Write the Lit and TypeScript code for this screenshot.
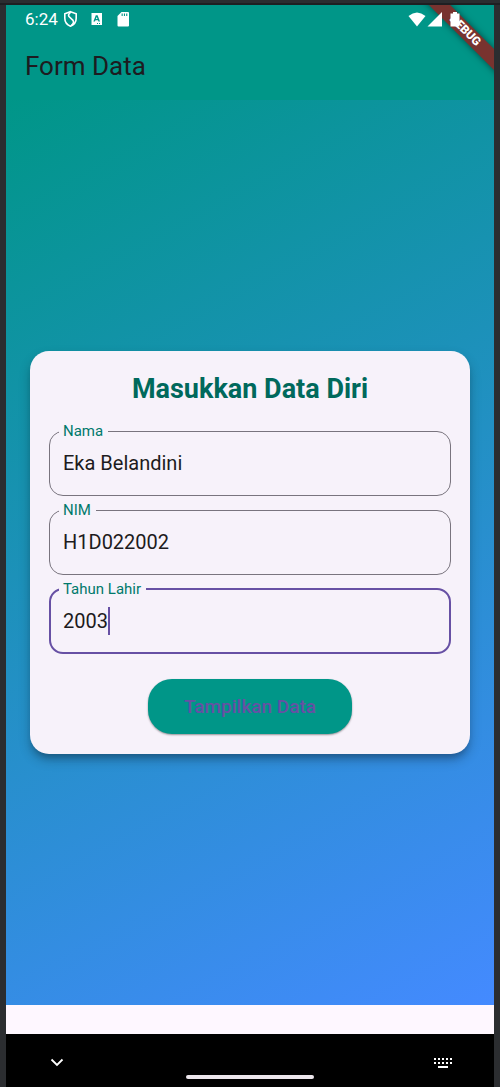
import { LitElement, html, css, svg } from "lit";
import { customElement, state } from "lit/decorators.js";

interface Field {
  id: string;
  label: string;
  value: string;
}

@customElement("status-bar")
class StatusBar extends LitElement {
  static styles = css`
    :host {
      display: flex;
      justify-content: space-between;
      align-items: center;
      height: 28px;
      padding: 0 32px 0 19px;
      color: #fff;
      font-size: 17px;
      line-height: 20px;
    }
    .group {
      display: flex;
      align-items: center;
    }
    .left {
      gap: 5px;
    }
    svg {
      display: block;
      fill: currentColor;
    }
  `;

  render() {
    return html`
      <div class="group left">
        <span>6:24</span>
        <svg width="74" height="18" viewBox="0 0 74 18" aria-hidden="true">
          <path
            d="M7.5 1.7 13.2 3.7V8.3C13.2 11.8 10.8 14.9 7.5 16.2 4.2 14.9 1.8 11.8 1.8 8.3V3.7Z"
            fill="none"
            stroke="currentColor"
            stroke-width="1.6"
          />
          <path
            d="M7.8 2.2Q4.6 4.6 6 6.6L10 10.4Q11.6 12.4 8.4 15.4"
            fill="none"
            stroke="currentColor"
            stroke-width="1.6"
          />
          <path
            fill-rule="evenodd"
            d="M28.5 3H39V15H28.5ZM32.8 5.2 30.4 11.5H32L32.4 10.3H35L35.4 11.5H37L34.6 5.2ZM33.7 6.9 34.5 9.1H32.9ZM34 13V14H35V13ZM36 13V14H37V13Z"
          />
          <path
            fill-rule="evenodd"
            d="M58.5 2H65Q66 2 66 3V15.5Q66 16.5 65 16.5H55.5Q54.5 16.5 54.5 15.5V6ZM58.6 3.6V6H59.7V3.6ZM60.9 3.6V6H62V3.6ZM63.2 3.6V6H64.3V3.6Z"
          />
        </svg>
      </div>
      <svg width="54" height="18" viewBox="0 0 54 18" aria-hidden="true">
        <path d="M0.5 6Q9 -1 17.5 6L9 16.5Z" />
        <path d="M34 2V16.5H19.5Z" />
        <path d="M45 2H49V3.5H51.5V16.5H42.5V3.5H45Z" />
      </svg>
    `;
  }
}

@customElement("debug-banner")
class DebugBanner extends LitElement {
  static styles = css`
    :host {
      position: absolute;
      top: 0;
      right: 0;
      width: 84px;
      height: 84px;
      overflow: hidden;
      pointer-events: none;
    }
    .band {
      position: absolute;
      top: 18px;
      left: -5px;
      width: 120px;
      height: 15px;
      transform: rotate(45deg);
      background: #78332f;
      box-shadow: 0 0 7px rgba(0, 0, 0, 0.5);
      color: #fff;
      font-size: 12px;
      line-height: 15px;
      font-weight: 900;
      text-align: center;
    }
  `;

  render() {
    return html`<div class="band">DEBUG</div>`;
  }
}

@customElement("app-root")
class AppRoot extends LitElement {
  @state() private fields: Field[] = [
    { id: "nama", label: "Nama", value: "Eka Belandini" },
    { id: "nim", label: "NIM", value: "H1D022002" },
    { id: "tahun", label: "Tahun Lahir", value: "2003" },
  ];

  @state() private active = "tahun";

  static styles = css`
    :host {
      display: block;
      font-family: Roboto, sans-serif;
      background: #2b2d30;
    }
    * {
      box-sizing: border-box;
    }
    .frame {
      display: flex;
      flex-direction: column;
      min-height: 100vh;
      padding: 0 6px;
      border-top: 3px solid #2b2d30;
    }
    .edge {
      height: 2px;
      margin: 0 -6px;
      background: #1e1f22;
    }
    .screen {
      position: relative;
      flex: 1;
      display: flex;
      flex-direction: column;
      background: #fef7ff;
    }
    header {
      background: #009688;
    }
    status-bar {
      position: relative;
      z-index: 2;
    }
    h1 {
      margin: 0;
      padding: 0 19px;
      font-size: 26px;
      line-height: 67px;
      font-weight: 400;
      color: #1d1b20;
    }
    main {
      flex: 1;
      display: flex;
      flex-direction: column;
      justify-content: center;
      padding: 24px;
      background: linear-gradient(152deg, #009688, #448aff);
    }
    .card {
      display: flex;
      flex-direction: column;
      padding: 19px 19px 20px;
      border-radius: 19px;
      background: #f7f2fa;
      box-shadow:
        0 6px 6px -3px rgba(0, 0, 0, 0.2),
        0 6px 12px rgba(0, 0, 0, 0.24);
    }
    h2 {
      margin: 0 0 15px;
      font-size: 27px;
      line-height: 38px;
      font-weight: 700;
      text-align: center;
      color: #00695c;
    }
    .fields {
      display: flex;
      flex-direction: column;
      gap: 6px;
    }
    fieldset {
      display: flex;
      min-width: 0;
      margin: 0;
      padding: 10px 13px 18px;
      border: 1px solid #79747e;
      border-radius: 14px;
    }
    fieldset.active {
      padding: 10px 12px 17px;
      border: 2px solid #6750a4;
    }
    legend {
      margin-left: -4px;
      padding: 0 5px 0 4px;
      font-size: 15px;
      line-height: 16px;
      color: #00796b;
    }
    input {
      flex: 1;
      min-width: 0;
      height: 28px;
      margin: 0;
      padding: 0;
      border: 0;
      outline: 0;
      background: none;
      font: inherit;
      font-size: 20px;
      color: #1d1b20;
      caret-color: transparent;
    }
    .active input {
      flex: none;
      max-width: 100%;
      field-sizing: content;
    }
    .caret {
      width: 2px;
      height: 28px;
      background: #6750a4;
    }
    button {
      align-self: center;
      height: 55px;
      margin-top: 25px;
      padding: 0 36px;
      border: 0;
      border-radius: 24px;
      background: #009688;
      box-shadow: 0 1px 2px rgba(0, 0, 0, 0.4);
      font: inherit;
      font-size: 19px;
      font-weight: 500;
      color: #6750a4;
    }
    .inset {
      height: 29px;
    }
    .nav {
      display: grid;
      grid-template-columns: 1fr auto 1fr;
      align-items: center;
      height: 53px;
      padding: 0 40px;
      background: #000;
    }
    .nav button {
      display: flex;
      align-self: auto;
      justify-self: start;
      height: auto;
      margin: 0;
      padding: 0;
      border-radius: 0;
      background: none;
      box-shadow: none;
    }
    .nav button:last-child {
      justify-self: end;
    }
    .handle {
      align-self: end;
      width: 128px;
      height: 4px;
      margin-bottom: 8px;
      border-radius: 2px;
      background: #ece6ec;
    }
  `;

  private setValue(id: string, e: Event) {
    const value = (e.target as HTMLInputElement).value;
    this.fields = this.fields.map((f) => (f.id === id ? { ...f, value } : f));
  }

  private renderField(f: Field) {
    const active = f.id === this.active;
    return html`
      <fieldset class=${active ? "active" : ""}>
        <legend><label for=${f.id}>${f.label}</label></legend>
        <input
          id=${f.id}
          type="text"
          .value=${f.value}
          @focus=${() => (this.active = f.id)}
          @input=${(e: Event) => this.setValue(f.id, e)}
        />
        ${active ? html`<span class="caret"></span>` : ""}
      </fieldset>
    `;
  }

  render() {
    const keys = [0, 1].flatMap((row) =>
      [0, 1, 2, 3, 4].map(
        (col) => svg`<rect x=${8 + col * 4} y=${11 + row * 4} width="2" height="2" />`
      )
    );
    return html`
      <div class="frame">
        <div class="edge"></div>
        <div class="screen">
          <header>
            <status-bar></status-bar>
            <h1>Form Data</h1>
          </header>
          <main>
            <form class="card" @submit=${(e: Event) => e.preventDefault()}>
              <h2>Masukkan Data Diri</h2>
              <div class="fields">${this.fields.map((f) => this.renderField(f))}</div>
              <button type="submit">Tampilkan Data</button>
            </form>
          </main>
          <div class="inset"></div>
          <debug-banner></debug-banner>
          <nav class="nav">
            <button type="button" aria-label="Tutup papan ketik">
              <svg width="22" height="28" viewBox="0 0 22 28">
                <path d="M5.5 12.5 11 18 16.5 12.5" fill="none" stroke="#fff" stroke-width="1.8" />
              </svg>
            </button>
            <span class="handle"></span>
            <button type="button" aria-label="Pilih papan ketik">
              <svg width="28" height="28" viewBox="0 0 28 28" fill="#fff" shape-rendering="crispEdges">
                ${keys}
                <rect x="12" y="19" width="10" height="2" />
              </svg>
            </button>
          </nav>
        </div>
      </div>
    `;
  }
}
